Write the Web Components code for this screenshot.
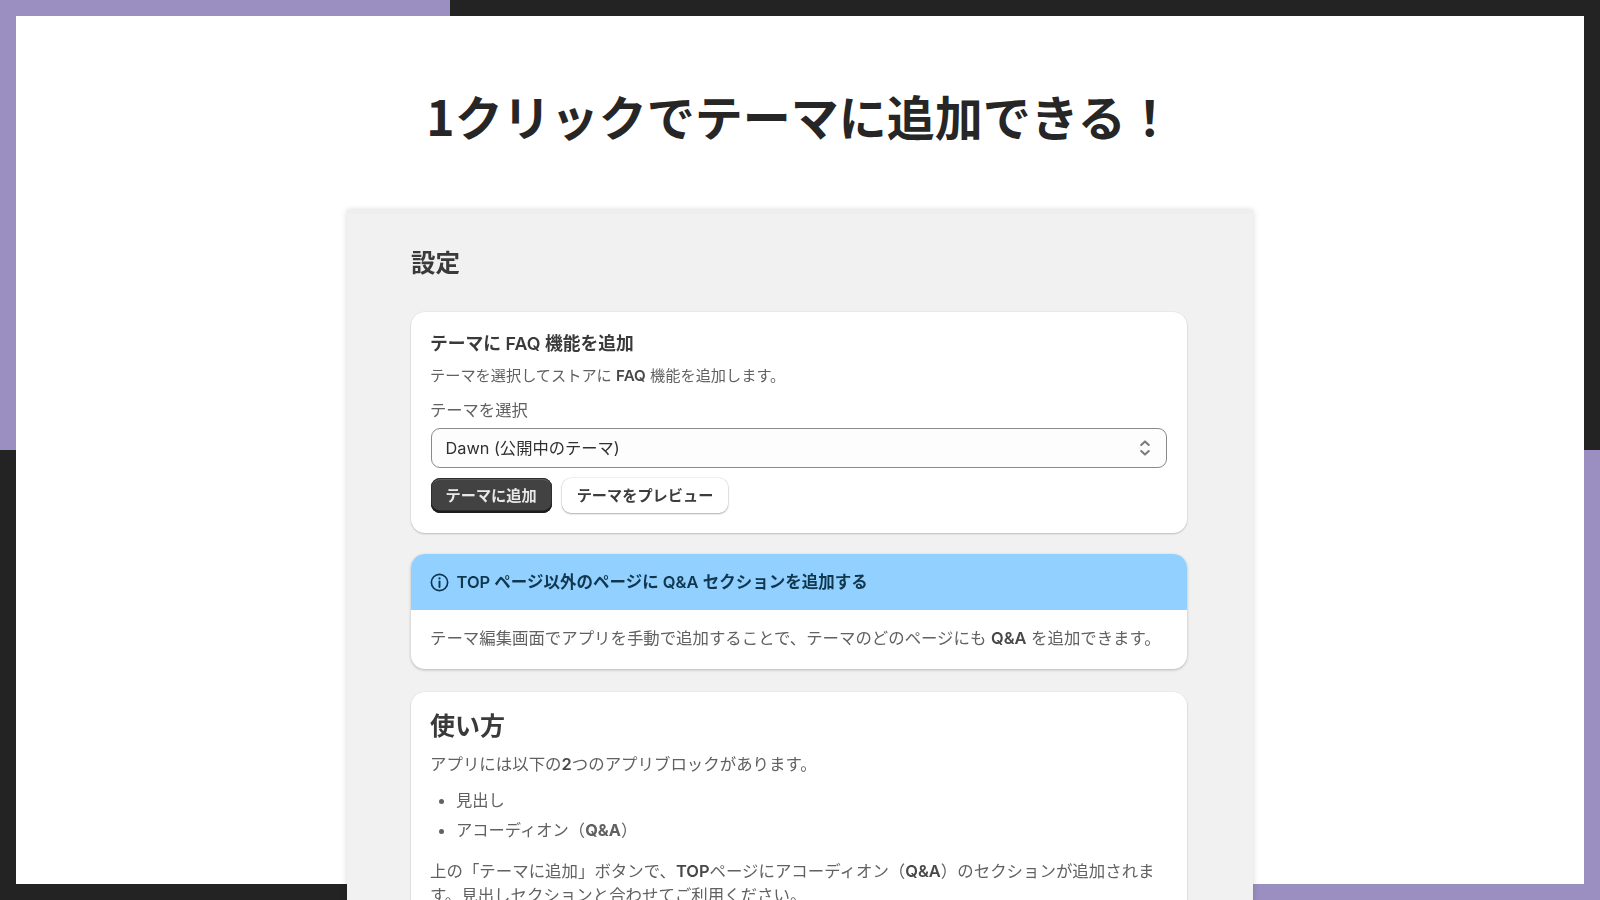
<!DOCTYPE html>
<html lang="ja"><head><meta charset="utf-8"><title>FAQ</title>
<style>
html,body{margin:0;padding:0;background:#232323}
body{font-family:Inter,"Noto Sans CJK JP",sans-serif;color:#303030}
</style></head><body>
<x-frame>
  <h1 slot="title">1クリックでテーマに追加できる！</h1>
  <x-panel heading="設定">
    <x-card>
      <x-card-title>テーマに FAQ 機能を追加</x-card-title>
      <x-text size="small">テーマを選択してストアに <b>FAQ</b> 機能を追加します。</x-text>
      <x-select label="テーマを選択" value="Dawn (公開中のテーマ)"></x-select>
      <x-actions>
        <x-button variant="primary">テーマに追加</x-button>
        <x-button>テーマをプレビュー</x-button>
      </x-actions>
    </x-card>
    <x-banner heading="TOP ページ以外のページに Q&amp;A セクションを追加する">
      テーマ編集画面でアプリを手動で追加することで、テーマのどのページにも <b>Q&amp;A</b> を追加できます。
    </x-banner>
    <x-card tall>
      <x-section-title>使い方</x-section-title>
      <x-text>アプリには以下の<b>2</b>つのアプリブロックがあります。</x-text>
      <x-bullets><li>見出し</li><li>アコーディオン（<b>Q&amp;A</b>）</li></x-bullets>
      <x-text spaced>上の「テーマに追加」ボタンで、<b>TOP</b>ページにアコーディオン（<b>Q&amp;A</b>）のセクションが追加されます。見出しセクションと合わせてご利用ください。</x-text>
    </x-card>
  </x-panel>
</x-frame>
<script>
function def(name, css, html){
  customElements.define(name, class extends HTMLElement{
    connectedCallback(){
      if(this.shadowRoot) return;
      const r=this.attachShadow({mode:'open'});
      r.innerHTML='<style>'+css+'</style>'+(typeof html==='function'?html(this):html);
    }
  });
}
def('x-frame',`
 :host{display:block;width:1600px;height:900px;box-sizing:border-box;padding:16px;overflow:hidden;
  background:linear-gradient(#9b8fc2,#9b8fc2) 0 0/450px 450px no-repeat,
             linear-gradient(#9b8fc2,#9b8fc2) 100% 100%/450px 450px no-repeat,#232323}
 .white{background:#fff;height:868px;display:flex;flex-direction:column;align-items:center}
 ::slotted(h1){margin:0;padding:60px 0 56px;font:700 48px/78px "Noto Sans CJK JP",sans-serif;color:#262626;white-space:nowrap}
`,`<div class="white"><slot name="title"></slot><slot></slot></div>`);
def('x-panel',`
 :host{display:flex;flex-direction:column;gap:21px;box-sizing:border-box;width:906px;flex:none;
  background:#f1f1f1;padding:0 66px 60px 64px;border-top:4px solid #eeeeee;
  box-shadow:0 0 6px rgba(0,0,0,.16);filter:blur(.35px)}
 h2{margin:0;padding:29px 0 8px;font:600 24.5px/40px Inter,"Noto Sans CJK JP",sans-serif;color:#3a3a3a}
 ::slotted([tall]){margin-top:2px}
`,e=>`<h2>${e.getAttribute('heading')}</h2><slot></slot>`);
def('x-card',`
 :host{display:block;background:#fff;border-radius:14px;padding:20px 19px 20px;
  box-shadow:0 1px 2px rgba(0,0,0,.2),0 0 0 .5px rgba(0,0,0,.05)}
 :host([tall]){padding-top:18px}
`,`<slot></slot>`);
def('x-card-title',`:host{display:block;font:600 17.8px/24px Inter,"Noto Sans CJK JP",sans-serif;color:#3a3a3a}`,`<slot></slot>`);
def('x-section-title',`:host{display:block;font:600 25px/32px Inter,"Noto Sans CJK JP",sans-serif;color:#3a3a3a;margin-bottom:10px}`,`<slot></slot>`);
def('x-text',`
 :host{display:block;font:400 16.45px/24px Inter,"Noto Sans CJK JP",sans-serif;color:#616161;margin-top:8px}
 :host([size=small]){font-size:15.2px;line-height:22px;margin-top:9px}
 :host([spaced]){margin-top:14px}
 ::slotted(b){font-weight:600;color:#484848}
`,`<slot></slot>`);
def('x-select',`
 :host{display:block;margin-top:12px;font:400 16.3px/22px Inter,"Noto Sans CJK JP",sans-serif}
 label{display:block;color:#616161;margin-bottom:7px}
 .box{display:flex;align-items:center;justify-content:space-between;height:40px;box-sizing:border-box;padding:0 15px 0 14px;margin:0 1px 0 .5px;
   background:#fdfdfd;border:1px solid #8a8a8a;border-radius:9px;color:#303030}
 svg{display:block}
`,e=>`<label>${e.getAttribute('label')}</label><div class="box"><span>${e.getAttribute('value')}</span>
 <svg width="12" height="18" viewBox="0 0 12 18" fill="none" stroke="#7a7a7a" stroke-width="2" stroke-linecap="round" stroke-linejoin="round"><path d="M2.2 6 6 2.4 9.8 6M2.2 12 6 15.6 9.8 12"/></svg></div>`);
def('x-actions',`:host{display:flex;gap:10px;margin-top:10px;padding-left:.5px}`,`<slot></slot>`);
def('x-button',`
 :host{display:flex;align-items:center;height:35px;box-sizing:border-box;padding:0 15px;border-radius:9px;
  font:600 15.2px/22px Inter,"Noto Sans CJK JP",sans-serif;color:#3c3c3c;background:#fff;
  box-shadow:0 1px 2px rgba(0,0,0,.28),0 0 0 .5px rgba(0,0,0,.1)}
 :host([variant=primary]){color:#e8e8e8;background:#424242;
  box-shadow:inset 0 -2.5px 0 #1c1c1c,inset 0 0 0 1px #2e2e2e,inset 0 2px 0 #5c5c5c}
`,`<slot></slot>`);
def('x-banner',`
 :host{display:block;background:#fff;border-radius:14px;overflow:hidden;box-shadow:0 1px 3px rgba(0,0,0,.25)}
 .head{display:flex;align-items:center;gap:8px;height:56px;box-sizing:border-box;padding:0 18.5px;background:#91d0ff;
   font:600 16.5px/22px Inter,"Noto Sans CJK JP",sans-serif;color:#11374f}
 .body{padding:17px 19px 20px;font:400 16.42px/22px Inter,"Noto Sans CJK JP",sans-serif;color:#616161}
 ::slotted(b){font-weight:600;color:#484848}
 svg{display:block;flex:none}
`,e=>`<div class="head"><svg width="19" height="19" viewBox="0 0 18 18" fill="none" stroke="#0b3550" stroke-width="1.6"><circle cx="9" cy="9" r="7.7"/><path d="M9 8v5.2" stroke-linecap="round" stroke-width="1.8"/><circle cx="9" cy="5.1" r="1.05" fill="#0b3550" stroke="none"/></svg><span>${e.getAttribute('heading').replace(/&/g,'&amp;')}</span></div><div class="body"><slot></slot></div>`);
def('x-bullets',`
 :host{display:block;margin:9px 0 0;padding-left:26px;font:400 16.3px/30px Inter,"Noto Sans CJK JP",sans-serif;color:#616161}
 ::slotted(li){margin:0}
`,`<slot></slot>`);
</script>
</body></html>
